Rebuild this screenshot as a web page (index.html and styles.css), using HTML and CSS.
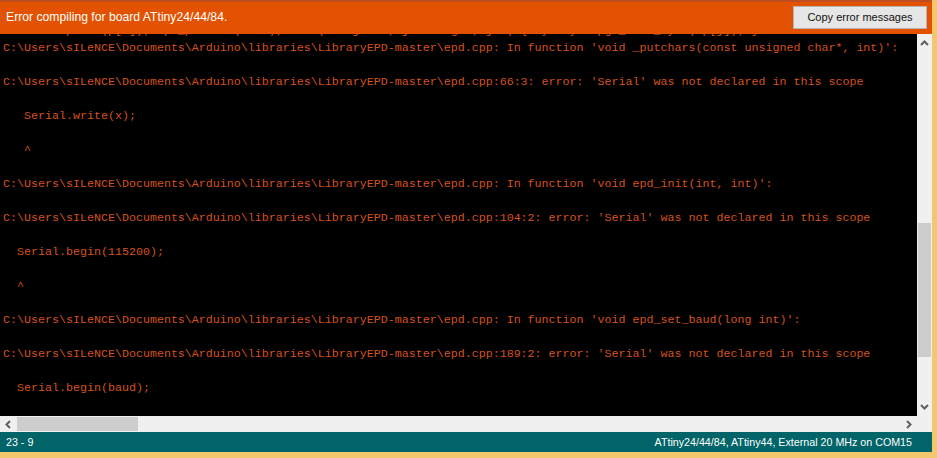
FILE: index.html
```html
<!DOCTYPE html>
<html lang="en">
<head>
    <meta charset="UTF-8">
    <meta name="viewport" content="width=device-width, initial-scale=1.0">
    <title>Arduino - Error</title>
    <link rel="stylesheet" href="styles.css">
</head>
<body>
    <div class="window">
        <div class="error-bar">
            <span class="error-text">Error compiling for board ATtiny24/44/84.</span>
            <button class="copy-button">Copy error messages</button>
        </div>

        <div class="console-area">
            <div class="console">
<pre class="output">  Serial.print(p[i]); epd_putchar(0x00); for (int j = 0; j &lt; length; j++) { byte y = pgm_read_byte(&amp;p[j]); }
C:\Users\sILeNCE\Documents\Arduino\libraries\LibraryEPD-master\epd.cpp: In function 'void _putchars(const unsigned char*, int)':

C:\Users\sILeNCE\Documents\Arduino\libraries\LibraryEPD-master\epd.cpp:66:3: error: 'Serial' was not declared in this scope

   Serial.write(x);

   ^

C:\Users\sILeNCE\Documents\Arduino\libraries\LibraryEPD-master\epd.cpp: In function 'void epd_init(int, int)':

C:\Users\sILeNCE\Documents\Arduino\libraries\LibraryEPD-master\epd.cpp:104:2: error: 'Serial' was not declared in this scope

  Serial.begin(115200);

  ^

C:\Users\sILeNCE\Documents\Arduino\libraries\LibraryEPD-master\epd.cpp: In function 'void epd_set_baud(long int)':

C:\Users\sILeNCE\Documents\Arduino\libraries\LibraryEPD-master\epd.cpp:189:2: error: 'Serial' was not declared in this scope

  Serial.begin(baud);
</pre>
            </div>
            <div class="vscroll">
                <svg class="arrow" width="9" height="6" viewBox="0 0 9 6"><polyline points="1,5 4.5,1.5 8,5" /></svg>
                <div class="vtrack">
                    <div class="vthumb"></div>
                </div>
                <svg class="arrow" width="9" height="6" viewBox="0 0 9 6"><polyline points="1,1 4.5,4.5 8,1" /></svg>
            </div>
        </div>

        <div class="hscroll">
            <svg class="arrow" width="6" height="9" viewBox="0 0 6 9"><polyline points="5,1 1.5,4.5 5,8" /></svg>
            <div class="htrack">
                <div class="hthumb"></div>
            </div>
            <svg class="arrow" width="6" height="9" viewBox="0 0 6 9"><polyline points="1,1 4.5,4.5 1,8" /></svg>
            <div class="corner"></div>
        </div>

        <div class="status-bar">
            <span>23 - 9</span>
            <span>ATtiny24/44/84, ATtiny44, External 20 MHz on COM15</span>
        </div>
    </div>
</body>
</html>
```

FILE: styles.css
```css
body {
    margin: 0;
    background-color: #f3c86c;
    font-family: "Liberation Sans", Arial, sans-serif;
}
.window {
    width: 932px;
    height: 452px;
    display: grid;
    grid-template-rows: 34px 382px 16px 20px;
    overflow: hidden;
}
.error-bar {
    background-color: #e35200;
    border-top: 2px solid #bd4f1f;
    display: flex;
    justify-content: space-between;
    align-items: center;
    padding: 0 5px 2px 6px;
}
.error-text {
    color: #fff;
    font-size: 12.2px;
}
.copy-button {
    width: 134px;
    height: 23px;
    background-color: #e6e6e6;
    border: 1px solid #b4b4b4;
    font-family: "Liberation Sans", Arial, sans-serif;
    font-size: 11px;
    color: #111;
    padding: 0;
}
.console-area {
    display: flex;
    min-height: 0;
}
.console {
    flex: 1;
    background-color: #000;
    overflow: hidden;
}
.output {
    margin: -11px 0 0 0;
    padding-left: 3px;
    font-family: "Liberation Mono", "Courier New", monospace;
    font-size: 11.667px;
    line-height: 17px;
    color: #d4521d;
}
.vscroll {
    width: 15px;
    background-color: #f0f0f0;
    display: flex;
    flex-direction: column;
    align-items: center;
}
.vscroll .arrow {
    margin: 6px 0;
}
.vtrack {
    flex: 1;
    width: 100%;
    position: relative;
}
.vthumb {
    position: absolute;
    left: 1px;
    right: 1px;
    top: 171px;
    height: 134px;
    background-color: #cdcdcd;
}
.arrow polyline {
    fill: none;
    stroke: #606060;
    stroke-width: 2;
}
.hscroll {
    display: flex;
    align-items: center;
    background-color: #f0f0f0;
}
.hscroll .arrow {
    margin: 0 5px;
}
.htrack {
    flex: 1;
    height: 100%;
    position: relative;
}
.hthumb {
    position: absolute;
    top: 1px;
    bottom: 1px;
    left: 1px;
    width: 121px;
    background-color: #cdcdcd;
}
.corner {
    width: 15px;
    height: 100%;
    background-color: #f0f0f0;
}
.status-bar {
    background-color: #006468;
    color: #fff;
    font-size: 10.7px;
    display: flex;
    justify-content: space-between;
    align-items: center;
    padding: 0 20px 0 6px;
}
```
